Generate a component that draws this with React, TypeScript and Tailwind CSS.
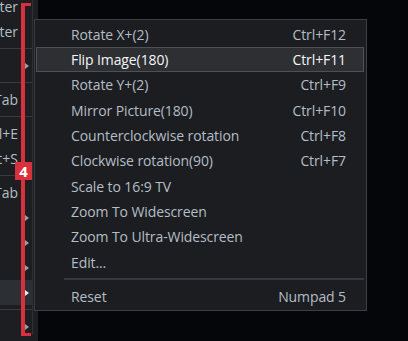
import React from 'react';

type LeftRow =
  | { kind: 'sep' }
  | { kind: 'item'; text?: string; arrow?: boolean; active?: boolean };

const leftRows: LeftRow[] = [
  { kind: 'item', text: 'Theater' },
  { kind: 'item', text: 'Theater' },
  { kind: 'sep' },
  { kind: 'item', arrow: true },
  { kind: 'sep' },
  { kind: 'item', text: 'Tab' },
  { kind: 'sep' },
  { kind: 'item', text: 'Ctrl+E' },
  { kind: 'item', text: 'Alt+S' },
  { kind: 'sep' },
  { kind: 'item', text: 'Tab' },
  { kind: 'item', arrow: true },
  { kind: 'item', arrow: true },
  { kind: 'item', arrow: true },
  { kind: 'item', arrow: true, active: true },
  { kind: 'sep' },
  { kind: 'item', arrow: true },
];

const menuItems = [
  { label: 'Rotate X+(2)', key: 'Ctrl+F12' },
  { label: 'Flip Image(180)', key: 'Ctrl+F11', active: true },
  { label: 'Rotate Y+(2)', key: 'Ctrl+F9' },
  { label: 'Mirror Picture(180)', key: 'Ctrl+F10' },
  { label: 'Counterclockwise rotation', key: 'Ctrl+F8' },
  { label: 'Clockwise rotation(90)', key: 'Ctrl+F7' },
  { label: 'Scale to 16:9 TV', key: '' },
  { label: 'Zoom To Widescreen', key: '' },
  { label: 'Zoom To Ultra-Widescreen', key: '' },
  { label: 'Edit...', key: '' },
];

function Arrow({ bright }: { bright?: boolean }) {
  return (
    <span
      className={`block w-0 h-0 border-y-[3.5px] border-y-transparent border-l-[4px] ${
        bright ? 'border-l-[#e8ecef]' : 'border-l-[#9a9fa5]'
      }`}
    />
  );
}

function LeftPanel() {
  return (
    <div className="w-[38px] h-full bg-[#1c1e21] flex">
      <div className="w-[33px] h-full border-r border-[#2e3134] flex flex-col -mt-[6px]">
        {leftRows.map((row, i) =>
          row.kind === 'sep' ? (
            <div key={i} className="h-[9px] flex items-center shrink-0">
              <div className="w-full h-px bg-[#383b3f]" />
            </div>
          ) : (
            <div
              key={i}
              className={`h-[25px] shrink-0 flex items-center ${row.active ? 'bg-[#2c2f33]' : ''}`}
            >
              <div className="w-[18px] overflow-hidden flex justify-end whitespace-nowrap text-[14px] text-[#b5bdc6]">
                {row.text}
              </div>
              <div className="ml-[7px]">{row.arrow && <Arrow bright={row.active} />}</div>
            </div>
          )
        )}
      </div>
    </div>
  );
}

export default function App() {
  return (
    <div
      className="relative w-[408px] h-[341px] overflow-hidden bg-[#05060a] flex"
      style={{ fontFamily: '"Open Sans", "Noto Sans", sans-serif' }}
    >
      <LeftPanel />

      {/* context submenu */}
      <div className="absolute left-[34px] top-[19px] w-[333px] h-[292px] bg-[#1b1d20] border border-[#3b3e42] pl-px pr-[2px] pt-[1.5px]">
        {menuItems.map((item) => (
          <div
            key={item.label}
            className={`h-[25.33px] flex items-center justify-between pl-[34px] pr-[17px] text-[14px] tracking-[-0.1px] ${
              item.active
                ? 'bg-[#2d2f33] border border-[#4d5054] text-[#f4f6f8]'
                : 'border border-transparent text-[#b5bdc6]'
            }`}
          >
            <span>{item.label}</span>
            <span>{item.key}</span>
          </div>
        ))}
        <div className="h-[9px] flex items-center pl-[28px]">
          <div className="w-full h-[2px] bg-[#35383c]" />
        </div>
        <div className="h-[25px] flex items-center justify-between pl-[34px] pr-[17px] text-[14px] tracking-[-0.1px] text-[#b5bdc6] border border-transparent">
          <span>Reset</span>
          <span>Numpad 5</span>
        </div>
      </div>

      {/* red annotation bracket */}
      <div className="absolute left-[21px] top-[3px] w-[10px] h-[333px] border-l-[4px] border-y-[3px] border-[#d9303e]" />
      <div className="absolute left-[15px] top-[162px] w-[17px] h-[18px] bg-[#d9303e] flex items-center justify-center text-white text-[15px] font-bold">
        4
      </div>
    </div>
  );
}
